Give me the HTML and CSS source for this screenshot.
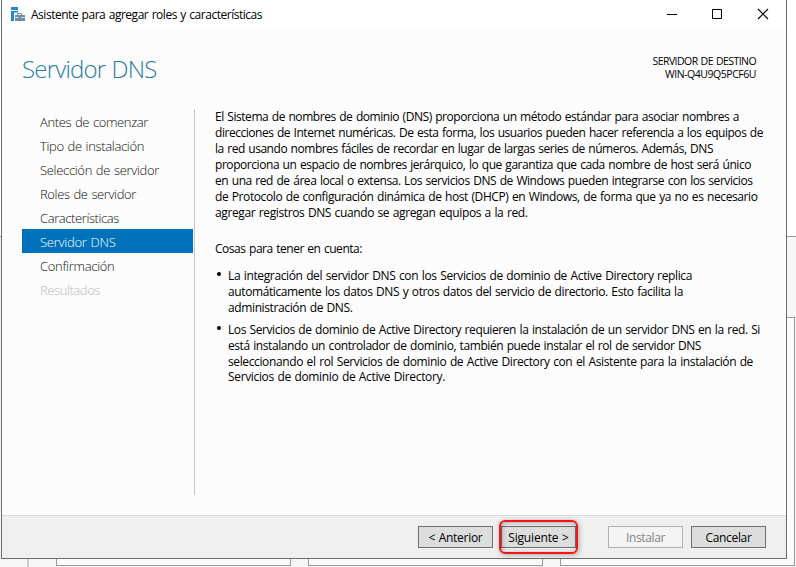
FILE: index.html
```html
<!DOCTYPE html>
<html lang="es">
<head>
<meta charset="utf-8">
<title>Asistente para agregar roles y características</title>
<link rel="stylesheet" href="styles.css">
</head>
<body>
<div class="desktop">
  <div class="rail"></div>
  <div class="tile"></div>
  <div class="tile"></div>
  <div class="tile"></div>
</div>
<main class="window">
  <header class="titlebar">
    <svg class="app-icon" width="16" height="16" viewBox="0 0 16 16">
      <path d="M0 1h7v3H0zM0 5h3v10H0zM3 5h4v1.500H3z" fill="#2088d8"/>
      <path d="M6.500 9V7.500h4V9" fill="none" stroke="#708d9f"/>
      <path d="M4 9h10v6H4z" fill="#708d9f"/>
      <path d="M3.500 11.500h4M10 11.500h4.500" stroke="#d5e0e7"/>
    </svg>
    <span class="caption" data-w="231">Asistente para agregar roles y características</span>
    <svg class="controls" width="104" height="12" viewBox="0 0 104 12" fill="none" stroke="#000">
      <path d="M1 6.5h10M46.5 1.5h9v9h-9z"/>
      <path d="M92 1l10 10M102 1L92 11" stroke-width="1.1"/>
    </svg>
  </header>
  <div class="heading">
    <h1><span data-w="134.5">Servidor DNS</span></h1>
    <div class="target"><span data-w="103.5">SERVIDOR DE DESTINO</span><span data-w="91">WIN-Q4U9Q5PCF6U</span></div>
  </div>
  <div class="content">
    <nav class="steps">
      <a><span data-w="108">Antes de comenzar</span></a>
      <a><span data-w="104">Tipo de instalación</span></a>
      <a><span data-w="119">Selección de servidor</span></a>
      <a><span data-w="96">Roles de servidor</span></a>
      <a><span data-w="79">Características</span></a>
      <a class="active"><span data-w="75.5">Servidor DNS</span></a>
      <a><span data-w="74.5">Confirmación</span></a>
      <a class="disabled"><span data-w="60">Resultados</span></a>
    </nav>
    <section class="text">
      <p>
        <span data-w="524">El Sistema de nombres de dominio (DNS) proporciona un método estándar para asociar nombres a</span>
        <span data-w="548">direcciones de Internet numéricas. De esta forma, los usuarios pueden hacer referencia a los equipos de</span>
        <span data-w="498">la red usando nombres fáciles de recordar en lugar de largas series de números. Además, DNS</span>
        <span data-w="536">proporciona un espacio de nombres jerárquico, lo que garantiza que cada nombre de host será único</span>
        <span data-w="537.5">en una red de área local o extensa. Los servicios DNS de Windows pueden integrarse con los servicios</span>
        <span data-w="542.5">de Protocolo de configuración dinámica de host (DHCP) en Windows, de forma que ya no es necesario</span>
        <span data-w="312.5">agregar registros DNS cuando se agregan equipos a la red.</span>
      </p>
      <p class="note"><span data-w="147">Cosas para tener en cuenta:</span></p>
      <ul>
        <li>
          <span data-w="464">La integración del servidor DNS con los Servicios de dominio de Active Directory replica</span>
          <span data-w="455">automáticamente los datos DNS y otros datos del servicio de directorio. Esto facilita la</span>
          <span data-w="124.5">administración de DNS.</span>
        </li>
        <li>
          <span data-w="532">Los Servicios de dominio de Active Directory requieren la instalación de un servidor DNS en la red. Si</span>
          <span data-w="473">está instalando un controlador de dominio, también puede instalar el rol de servidor DNS</span>
          <span data-w="525">seleccionando el rol Servicios de dominio de Active Directory con el Asistente para la instalación de</span>
          <span data-w="217">Servicios de dominio de Active Directory.</span>
        </li>
      </ul>
    </section>
  </div>
  <footer class="actions">
    <button><span data-w="54">&lt; Anterior</span></button>
    <button class="next"><span data-w="60.5">Siguiente &gt;</span></button>
    <button class="install" disabled><span data-w="39">Instalar</span></button>
    <button><span data-w="46">Cancelar</span></button>
  </footer>
</main>
<script src="fit.js"></script>
</body>
</html>
```
FILE: styles.css
```css
* { box-sizing: border-box; }
body {
  margin: 0;
  width: 796px;
  height: 567px;
  position: relative;
  overflow: hidden;
  background: #fff;
  color: #000;
  font: 12px/16px "Open Sans", "Noto Sans", sans-serif;
}
[data-w] { display: block; width: max-content; white-space: nowrap; word-spacing: .8px; }

.desktop {
  position: absolute;
  inset: 0 0 auto 0;
  display: flex;
  gap: 17px;
  height: 331px;
  margin-top: 236px;
  padding: 80px 1px 1px 0;
  border-top: 1px solid #999;
  background: #f6f6f6;
}
.rail { width: 29px; margin: -80px 10px -1px 0; border-right: 2px solid #ccc; }
.tile { width: 235px; border: 1px solid #999; background: #fcfcfc; }

.window {
  position: absolute;
  left: 1px;
  top: 0;
  width: 786px;
  height: 559px;
  display: flex;
  flex-direction: column;
  border: 1px solid #6c6c6c;
  border-top: 0;
  background: #fcfcfc;
}
.titlebar {
  display: flex;
  height: 30px;
  padding: 6px 16px 0 9px;
  background: #fff;
}
.caption { margin: 1px 0 0 4px; }
.app-icon { flex: none; }
.controls { margin: 2px 0 0 auto; }

.heading {
  display: flex;
  justify-content: space-between;
  height: 79px;
  padding: 0 30px 0 20px;
}
h1 {
  margin: 23px 0 0;
  color: #287d9c;
  font-size: 24px;
  font-weight: 300;
  line-height: 32px;
}
.target {
  display: flex;
  flex-direction: column;
  align-items: flex-end;
  padding-top: 25px;
  font-size: 10.5px;
  line-height: 13px;
}

.content { display: flex; height: 406px; }
.steps {
  width: 193px;
  height: 386px;
  padding: 0 1px 0 20px;
  border-right: 1px solid #c8c8c8;
  color: #111;
  font-size: 13px;
  font-weight: 300;
  line-height: 24px;
}
.steps a { display: block; height: 24px; padding: 1px 0 0 18px; }
.steps .active { background: #0072bc; color: #fff; }
.steps .disabled { color: #bbb; }

.text { padding-left: 20px; }
p { margin: 0; }
.note { margin-top: 20px; }
ul { margin: 11px 0 0; padding: 0 0 0 13px; list-style: none; }
li { position: relative; margin-bottom: 6px; }
li::before {
  content: "";
  position: absolute;
  left: -11px;
  top: 4px;
  width: 4px;
  height: 4px;
  border-radius: 50%;
  background: #000;
}
li + li { line-height: 15.75px; }

.actions {
  display: flex;
  height: 43px;
  padding: 10px 0 0 416px;
  border-top: 1px solid #d9d9d9;
  background: #efefef;
}
button {
  display: flex;
  justify-content: center;
  align-items: center;
  position: relative;
  width: 75px;
  height: 22px;
  margin: 0 8px 0 0;
  padding: 1px 0 0;
  border: 1px solid #707070;
  background: #ddd;
  color: #000;
  font: inherit;
}
.next::after {
  content: "";
  position: absolute;
  inset: -7px -3px -7px -3px;
  border: 2px solid #fa1414;
  border-radius: 6px;
  box-shadow: 1px 1px 5px rgba(0, 0, 0, .3), inset 1px 1px 5px rgba(0, 0, 0, .3);
}
.install { margin-left: 24px; border-color: #adb2b5; background: #f4f4f4; color: #838383; }
```
FILE: fit.js
```js
// Spread each line's characters evenly over its measured width.
document.querySelectorAll("[data-w]").forEach(function (el) {
  var chars = el.textContent.length;
  var natural = el.getBoundingClientRect().width;
  el.style.letterSpacing = (parseFloat(el.dataset.w) - natural) / chars + "px";
});
```
